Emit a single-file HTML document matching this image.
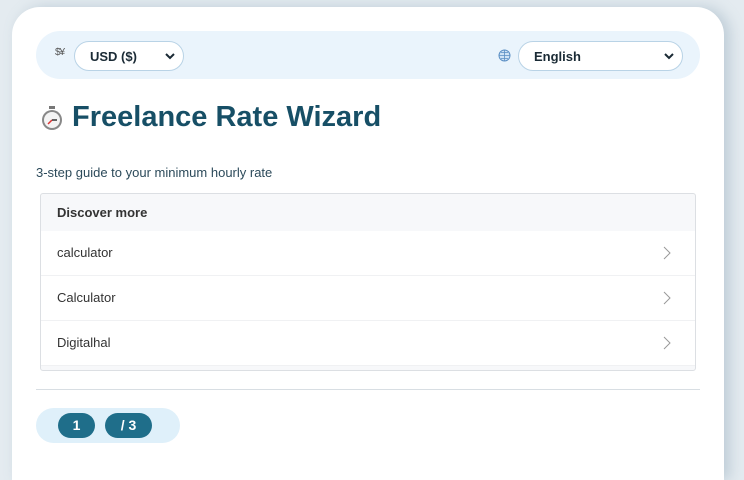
<!DOCTYPE html>
<html><head><meta charset="utf-8"><style>
*{box-sizing:border-box;margin:0;padding:0}
html,body{width:744px;height:480px;overflow:hidden}
body{background:#e4ebf0;font-family:"Liberation Sans",sans-serif;position:relative}
.card{position:absolute;left:12px;top:7px;width:712px;height:473px;background:#fff;border-radius:28px 28px 0 0;box-shadow:6px 0 14px rgba(120,150,170,.35)}
.bar{position:absolute;left:24px;top:24px;width:664px;height:48px;background:#eaf4fc;border-radius:24px}
.sel{position:absolute;top:10px;height:30px;border:1px solid #b9d3e6;border-radius:15px;background:#fff;font-size:13px;font-weight:bold;color:#1a2a35;padding:7px 0 0 15px}
.sel svg{position:absolute;right:8px;top:11px}
.title{position:absolute;left:28px;top:94px;font-size:29px;font-weight:bold;color:#174f66;display:flex;align-items:center;gap:8px}
.sub{position:absolute;left:24px;top:158px;font-size:13px;color:#2c4a5a}
.list{position:absolute;left:28px;top:186px;width:656px;height:178px;border:1px solid #dcdfe3;border-radius:3px;background:#f7f8fa;overflow:hidden}
.hd{height:37px;padding:11px 16px;font-size:13px;font-weight:bold;color:#333}
.row{height:45px;background:#fff;border-bottom:1px solid #f0f1f3;padding:14px 16px;font-size:13px;color:#333;position:relative}
.row svg{position:absolute;right:24px;top:15px}
.hr{position:absolute;left:24px;top:382px;width:664px;height:1px;background:#d8dee3}
.pg{position:absolute;left:24px;top:401px;width:144px;height:35px;background:#dff0fa;border-radius:18px}
.b{position:absolute;top:5px;height:25px;background:#1f6e8a;border-radius:13px;color:#fff;font-weight:bold;font-size:14px;text-align:center;line-height:25px}
</style></head><body>
<div class="card">
 <div class="bar">
  <span style="position:absolute;left:19px;top:16px;font-size:10px;color:#555;letter-spacing:-1px">$¥</span>
  <div class="sel" style="left:38px;width:110px">USD ($)<svg width="10" height="7"><path d="M1 1l4 4 4-4" stroke="#1a2a35" stroke-width="2" fill="none"/></svg></div>
  <svg style="position:absolute;left:462px;top:18px" width="13" height="13" viewBox="0 0 13 13"><circle cx="6.5" cy="6.5" r="5.5" fill="#cfe3f5" stroke="#5b8fc4"/><path d="M1 6.5h11M6.5 1v11M3 3.5h7M3 9.5h7" stroke="#5b8fc4" stroke-width=".8"/></svg>
  <div class="sel" style="left:482px;width:165px">English<svg width="10" height="7"><path d="M1 1l4 4 4-4" stroke="#1a2a35" stroke-width="2" fill="none"/></svg></div>
 </div>
 <div class="title"><svg width="24" height="26" viewBox="0 0 24 26"><rect x="9" y="1" width="6" height="3" fill="#777"/><circle cx="12" cy="15" r="10" fill="#888"/><circle cx="12" cy="15" r="8" fill="#f4f4f4"/><path d="M12 15l-4 4" stroke="#d33" stroke-width="1.5"/><path d="M12 15h5" stroke="#333" stroke-width="1.5"/></svg>Freelance Rate Wizard</div>
 <div class="sub">3-step guide to your minimum hourly rate</div>
 <div class="list">
  <div class="hd">Discover more</div>
  <div class="row">calculator<svg width="8" height="14"><path d="M1 1l6 6-6 6" stroke="#999" fill="none"/></svg></div>
  <div class="row">Calculator<svg width="8" height="14"><path d="M1 1l6 6-6 6" stroke="#999" fill="none"/></svg></div>
  <div class="row">Digitalhal<svg width="8" height="14"><path d="M1 1l6 6-6 6" stroke="#999" fill="none"/></svg></div>
 </div>
 <div class="hr"></div>
 <div class="pg"><div class="b" style="left:22px;width:37px">1</div><div class="b" style="left:69px;width:47px">/ 3</div></div>
</div>
</body></html>
